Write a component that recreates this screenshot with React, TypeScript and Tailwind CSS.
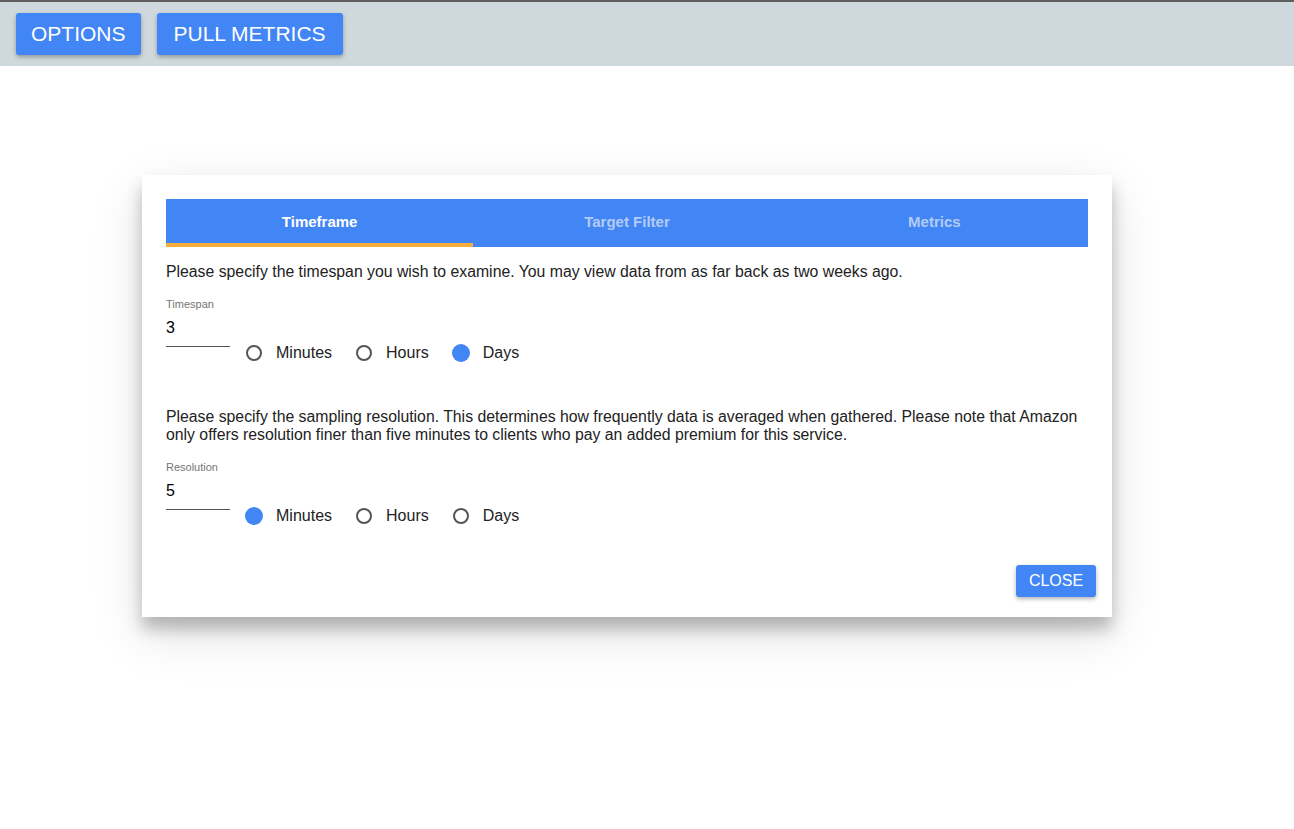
import React, { useState } from "react";

const font = { fontFamily: '"Liberation Sans", Arial, sans-serif' };

const units = ["Minutes", "Hours", "Days"];

const RadioGroup = ({ value, onChange }: { value: string; onChange: (v: string) => void }) => (
  <div className="flex items-center h-[20px]">
    {units.map((u) => (
      <label className="flex items-center mr-[23px] cursor-pointer" key={u} onClick={() => onChange(u)}>
        {value === u ? (
          <span className="w-[18px] h-[18px] rounded-full bg-[#4285f4] inline-block" />
        ) : (
          <span className="w-[16px] h-[16px] mx-[1px] rounded-full border-2 border-[#555] inline-block" />
        )}
        <span className="ml-[13px] text-[16px] text-[#222]">{u}</span>
      </label>
    ))}
  </div>
);

const Field = ({ label, value }: { label: string; value: string }) => (
  <div className="w-[64px]">
    <div className="text-[11px] leading-[13px] text-[#757575]">{label}</div>
    <div className="text-[16px] leading-[18px] text-black mt-[8px] pb-[9px] border-b border-[#555]">{value}</div>
  </div>
);

export default function App() {
  const [tab, setTab] = useState(0);
  const [span, setSpan] = useState("Days");
  const [res, setRes] = useState("Minutes");
  const tabs = ["Timeframe", "Target Filter", "Metrics"];

  return (
    <div className="min-h-[829px] bg-white" style={font}>
      <div className="h-[66px] bg-[#cfd8dc] border-t-2 border-[#5f5f5f] flex items-center px-[16px] gap-[16px]">
        <button className="h-[42px] px-[15px] bg-[#4285f4] text-white text-[21px] rounded-[3px] shadow-[0_2px_4px_rgba(0,0,0,0.3)]">
          OPTIONS
        </button>
        <button className="h-[42px] px-[17px] bg-[#4285f4] text-white text-[21px] rounded-[3px] shadow-[0_2px_4px_rgba(0,0,0,0.3)]">
          PULL METRICS
        </button>
      </div>

      <div className="ml-[142px] mt-[109px] w-[970px] bg-white px-[24px] pt-[24px] pb-[20px] shadow-[0_12px_15px_rgba(0,0,0,0.24),0_17px_50px_rgba(0,0,0,0.12)]">
        <div className="grid grid-cols-3 h-[48px] bg-[#4285f4]">
          {tabs.map((t, i) => (
            <div
              className={
                "flex items-center justify-center text-[15px] font-bold cursor-pointer border-b-4 pt-[2px] " +
                (tab === i ? "text-white border-[#f5ad3c]" : "text-[#b3ccf7] border-transparent")
              }
              key={t}
              onClick={() => setTab(i)}
            >
              {t}
            </div>
          ))}
        </div>

        <p className="mt-[16px] text-[15.8px] leading-[18px] text-[#222]">
          Please specify the timespan you wish to examine. You may view data from as far back as two weeks ago.
        </p>
        <div className="flex items-start mt-[17px]">
          <Field label="Timespan" value="3" />
          <div className="ml-[15px] mt-[45px]">
            <RadioGroup onChange={setSpan} value={span} />
          </div>
        </div>

        <p className="mt-[45px] text-[15.8px] leading-[18px] text-[#222]">
          Please specify the sampling resolution. This determines how frequently data is averaged when gathered. Please note that Amazon
          only offers resolution finer than five minutes to clients who pay an added premium for this service.
        </p>
        <div className="flex items-start mt-[17px]">
          <Field label="Resolution" value="5" />
          <div className="ml-[15px] mt-[45px]">
            <RadioGroup onChange={setRes} value={res} />
          </div>
        </div>

        <div className="flex justify-end mt-[39px] -mr-[8px]">
          <button className="h-[32px] w-[80px] bg-[#4285f4] text-white text-[16px] rounded-[3px] shadow-[0_2px_4px_rgba(0,0,0,0.3)]">
            CLOSE
          </button>
        </div>
      </div>
    </div>
  );
}
